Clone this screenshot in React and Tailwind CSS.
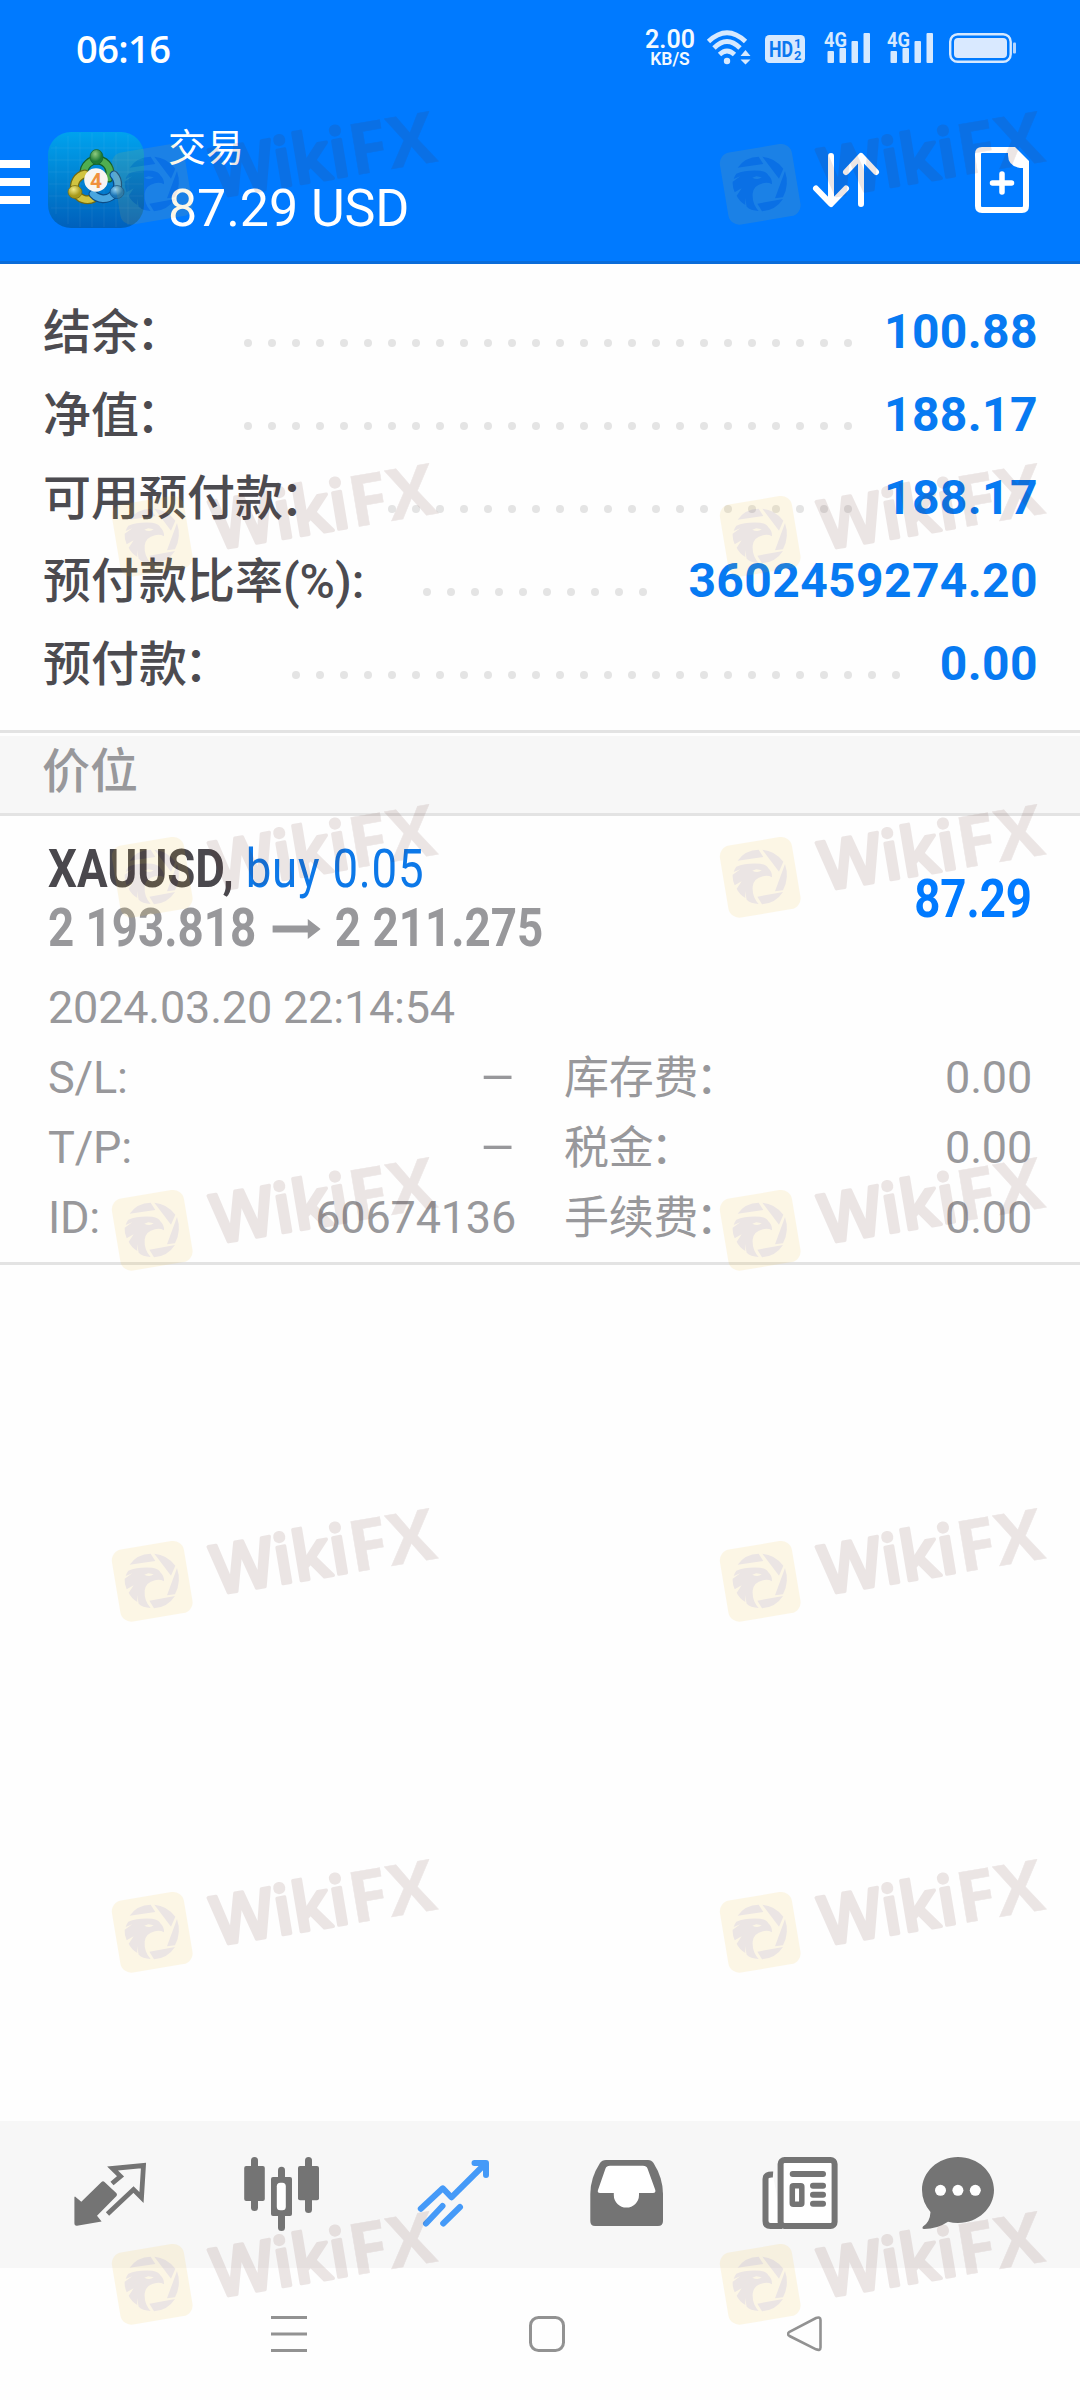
import React from 'react'

const summary = [
  { label: '结余', colon: '：', value: '100.88', start: 244, dots: 26 },
  { label: '净值', colon: '：', value: '188.17', start: 244, dots: 26 },
  { label: '可用预付款', colon: '：', value: '188.17', start: 388, dots: 20 },
  { label: '预付款比率(%):', value: '3602459274.20', start: 423, dots: 10 },
  { label: '预付款', colon: '：', value: '0.00', start: 292, dots: 26 },
]

const details = [
  { left: 'S/L:', right: '库存费', rightValue: '0.00' },
  { left: 'T/P:', right: '税金', rightValue: '0.00' },
  { left: 'ID:', leftValue: '60674136', right: '手续费', rightValue: '0.00' },
]

const Signal = () => (
  <svg className="h-9 w-12" viewBox="0 0 48 36" fill="#d6e9ff">
    <text x="0" y="18.5" fontSize="21" fontWeight="700" fontFamily="Roboto" textLength="23" lengthAdjust="spacingAndGlyphs">4G</text>
    <rect x="3.5" y="23" width="6.5" height="12" rx="1" />
    <rect x="15.5" y="20" width="6.5" height="15" rx="1" />
    <rect x="27.5" y="13" width="6.5" height="22" rx="1" />
    <rect x="39.5" y="5" width="6.5" height="30" rx="1" />
  </svg>
)

const StatusBar = () => (
  <div className="flex h-[98px] items-start pl-[76px] pr-[63px] text-white">
    <div className="mt-[21px] font-['Open_Sans',sans-serif] text-[38px] font-semibold leading-[54px] tracking-[-0.6px]">06:16</div>
    <div className="ml-auto flex pt-7">
      <div className="-mt-px mr-[2px] flex w-[52px] flex-col items-center font-semibold text-[#f2f9ff]">
        <span className="text-[25px] leading-[25px]">2.00</span>
        <span className="text-[17.5px] leading-[14px]">KB/S</span>
      </div>
      <svg className="ml-2 h-10 w-[46px]" viewBox="0 0 46 40" fill="none" stroke="#d6e9ff" strokeWidth="4.8">
        <path d="M2.5 13.5Q21 -4 39.5 13.5M8 20Q21 7 34 20M13.5 26.5Q21 19.5 28.5 26.5" />
        <circle cx="21" cy="33" r="3.2" fill="#d6e9ff" stroke="none" />
        <path d="M34.5 28l5-6 5 6zM34.5 31.5l5 5 5-5z" fill="#d6e9ff" stroke="none" />
      </svg>
      <svg className="ml-[13px] h-10 w-10" viewBox="0 0 40 40">
        <rect y="7" width="40" height="28" rx="4.5" fill="#d6e9ff" />
        <text x="4" y="29" fontSize="22" fontWeight="700" fontFamily="Roboto" fill="#0b78f0" textLength="24" lengthAdjust="spacingAndGlyphs">HD</text>
        <text x="29" y="20" fontSize="13" fontWeight="700" fontFamily="Roboto" fill="#0b78f0">1</text>
        <text x="29" y="31.5" fontSize="13" fontWeight="700" fontFamily="Roboto" fill="#0b78f0">2</text>
      </svg>
      <div className="ml-[19px] flex gap-[15px]">
        <Signal />
        <Signal />
      </div>
      <svg className="ml-[13px] h-10 w-[69px]" viewBox="0 0 69 40">
        <rect x="2.2" y="6.2" width="60.5" height="27.6" rx="7.5" fill="none" stroke="#d6e9ff" strokeWidth="2.4" />
        <rect x="6" y="10" width="53" height="20" rx="4" fill="#d9e9ff" />
        <rect x="65" y="14.5" width="3" height="11" rx="1" fill="#b5d6ff" />
      </svg>
    </div>
  </div>
)

const AppLogo = () => (
  <svg className="ml-[18px] h-24 w-24" viewBox="0 0 96 96">
    <defs>
      <linearGradient id="tile" x1="0" y1="0" x2="0" y2="1">
        <stop offset="0" stopColor="#00a2ee" />
        <stop offset=".5" stopColor="#0082d2" />
        <stop offset="1" stopColor="#0060bc" />
      </linearGradient>
      <radialGradient id="green" cx=".4" cy=".3"><stop offset="0" stopColor="#8fcb80" /><stop offset="1" stopColor="#1d7a35" /></radialGradient>
      <radialGradient id="yellow" cx=".4" cy=".3"><stop offset="0" stopColor="#f3eb86" /><stop offset="1" stopColor="#a89a1a" /></radialGradient>
      <radialGradient id="sky" cx=".4" cy=".3"><stop offset="0" stopColor="#93d2f5" /><stop offset="1" stopColor="#1873b5" /></radialGradient>
    </defs>
    <rect width="96" height="96" rx="23" fill="url(#tile)" />
    <path d="M8 14V82M20 4V92M32 1V95M44 1V95M56 1V95M68 1V95M80 3V93M3 16H93M1 28H95M1 40H95M1 52H95M1 64H95M3 76H93" stroke="#fff" strokeOpacity=".06" />
    <g fill="none" strokeLinecap="round">
      <path d="M36 42a13 13 0 1 1 25 4" stroke="#14602a" strokeWidth="9" />
      <path d="M36 42a13 13 0 1 1 25 4" stroke="#4fae50" strokeWidth="6.5" />
      <path d="M46 66a13 13 0 1 1-9-24" stroke="#716a12" strokeWidth="9" />
      <path d="M46 66a13 13 0 1 1-9-24" stroke="#d1c440" strokeWidth="6.5" />
      <path d="M66 43a13 13 0 1 1-21 19" stroke="#0c4c86" strokeWidth="9" />
      <path d="M66 43a13 13 0 1 1-21 19" stroke="#4aa6df" strokeWidth="6.5" />
    </g>
    <ellipse cx="48.5" cy="25" rx="6.5" ry="7.5" fill="url(#green)" stroke="#14602a" strokeWidth=".7" />
    <ellipse cx="27" cy="60" rx="7" ry="6.5" fill="url(#yellow)" stroke="#716a12" strokeWidth=".7" />
    <ellipse cx="69" cy="60" rx="7" ry="6.5" fill="url(#sky)" stroke="#0c4c86" strokeWidth=".7" />
    <circle cx="48" cy="48" r="11.8" fill="#f7f5f2" />
    <text x="48" y="55.5" textAnchor="middle" fontSize="21" fontWeight="700" fontFamily="Roboto" fill="#f0913c">4</text>
  </svg>
)

const Header = () => (
  <header className="h-[264px] border-b-[3px] border-[#0a6cd9] bg-[#007aff] text-white">
    <StatusBar />
    <div className="flex items-start">
      <div className="mt-[62px] flex w-[30px] flex-col gap-[10px]">
        <span className="h-2 bg-white" />
        <span className="h-2 bg-white" />
        <span className="h-2 bg-white" />
      </div>
      <div className="mt-[34px]">
        <AppLogo />
      </div>
      <div className="ml-6 mt-[26px] whitespace-nowrap">
        <div className="text-[38px] leading-[48px]">交易</div>
        <div className="mt-[7px] text-[52px] leading-[60px] tracking-[-0.1px]">87.29 USD</div>
      </div>
      <svg className="ml-auto mt-[50px] h-[64px] w-[70px]" viewBox="0 0 70 64" fill="none" stroke="#fff" strokeWidth="6" strokeLinecap="round" strokeLinejoin="round">
        <path d="M20 8V55M5 40.5L20 56L35 40.5M50 56V9M35 24L50 8L65 24" />
      </svg>
      <svg className="ml-[93px] mr-[50px] mt-[48px] h-[68px] w-[56px]" viewBox="0 0 56 68" fill="none" stroke="#fff" strokeWidth="6">
        <path d="M40 4H8Q4 4 4 8V60Q4 64 8 64H48Q52 64 52 60V16" />
        <path d="M34 1H41L55 15V22H46Q34 20 34 9Z" fill="#fff" stroke="none" />
        <path d="M28 28V46M18.5 37H37.5" strokeWidth="5.5" strokeLinecap="round" />
      </svg>
    </div>
  </header>
)

const Summary = () => (
  <section className="border-b-[3px] border-[#e3e3e3] pb-[25px] pl-[43px] pr-[42px] pt-[26px]">
    {summary.map((row) => (
      <div key={row.label} className="flex h-[83px] items-center whitespace-nowrap text-[48px] leading-[83px]">
        <div className="shrink-0 pt-[2px] font-medium text-[#4c4b50]" style={{ width: row.start - 43 }}>
          {row.label}
          {row.colon && <span className="-ml-[3px]">{row.colon}</span>}
        </div>
        <div className="mt-[23px] flex shrink-0 gap-4">
          {Array.from({ length: row.dots }, (_, i) => (
            <span key={i} className="size-2 rounded-full bg-[#e4e4e4]" />
          ))}
        </div>
        <div className="ml-auto font-bold tracking-[0.4px] text-[#077af2]">{row.value}</div>
      </div>
    ))}
  </section>
)

const Position = () => (
  <section className="border-b-[3px] border-[#e3e3e3] pb-[9px] pl-12 pr-12 pt-6 text-[#98989b]">
    <div className="flex items-center justify-between whitespace-nowrap text-[53px] leading-[59px]">
      <div>
        <div className="origin-left scale-x-[0.86]">
          <span className="font-bold text-[#4a484d]">XAUUSD,</span>
          <span className="tracking-[0.9px] text-[#0c78e8]"> buy 0.05</span>
        </div>
        <div className="flex origin-left scale-x-[0.863] items-center font-bold">
          2 193.818
          <svg className="ml-[19px] mr-[16px] h-5 w-[56px]" viewBox="0 0 56 20" fill="#98989b">
            <path d="M0 6.5H41V0L56 10L41 20V13.5H0Z" />
          </svg>
          2 211.275
        </div>
      </div>
      <div className="origin-right scale-x-[0.86] font-bold text-[#007aff]">87.29</div>
    </div>
    <div className="mt-[15px] text-[45px] leading-[70px] tracking-[-0.2px]">
      <div>2024.03.20 22:14:54</div>
      {details.map((row) => (
        <div key={row.left} className="flex h-[70px] whitespace-nowrap">
          <div className="flex w-[468px] justify-between">
            <span>{row.left}</span>
            {row.leftValue ? <span>{row.leftValue}</span> : <span className="origin-right scale-x-[1.26]">–</span>}
          </div>
          <div className="ml-12 flex flex-1 justify-between">
            <span className="pt-px">
              {row.right}
              <span className="-ml-[3px]">：</span>
            </span>
            <span>{row.rightValue}</span>
          </div>
        </div>
      ))}
    </div>
  </section>
)

const TabBar = () => (
  <nav className="flex h-[147px] gap-[92px] bg-[#f7f7f7] pl-[70px] pt-[33px]">
    <svg className="size-20 shrink-0" viewBox="0 0 80 80" fill="#747474">
      <path d="M5 42.5L11.3 47.7L31.5 28Q33 26.5 34.5 28L46.5 39.2Q47.5 40.7 46.5 42L27 61.7L31.6 67.5L7 71.7Q4.4 72 4.4 69V43Z" />
      <path d="M42 29.5L50.5 22.3L42.5 14.5L73.5 11.5L71.5 43.5L63.5 35.5L37.5 60" fill="none" stroke="#747474" strokeWidth="4.8" />
    </svg>
    <svg className="size-20 shrink-0" viewBox="0 0 80 80" fill="#747474">
      <rect x="2.2" y="12" width="20.6" height="35" rx="2" />
      <rect x="9" y="3" width="7" height="54" rx="3.5" />
      <rect x="36" y="12.7" width="7" height="64.3" rx="3.5" />
      <rect x="29" y="23" width="21" height="39" rx="2" />
      <rect x="34.8" y="28.7" width="9" height="27.5" rx="3.5" fill="#fff" />
      <rect x="56" y="12" width="21" height="34.3" rx="2" />
      <rect x="63" y="3" width="7" height="56" rx="3.5" />
    </svg>
    <svg className="size-20 shrink-0" viewBox="0 0 80 80" fill="none" stroke="#459af8" strokeWidth="6" strokeLinecap="round" strokeLinejoin="round">
      <path d="M6.8 54.7L28.8 34.3L37.4 43.3L71.5 9.5M60.5 9H72V21M12 69.5L28.5 52M29.2 69.5L46 53" />
    </svg>
    <svg className="size-20 shrink-0" viewBox="0 0 80 80" fill="#747474">
      <path d="M20 6H62Q65.5 6 67.5 9Q77 24 77 40V67Q77 72 72 72H9Q4.3 72 4.3 67V40Q4.3 24 14 9Q16 6 20 6Z" />
      <path d="M24 11.7H57Q60.5 11.7 61.5 14.5L69.3 36Q70 39 67 39H53V41A12.6 12.6 0 0 1 27.8 41V39H14Q11 39 12 36L19.5 14.5Q20.5 11.7 24 11.7Z" fill="#fff" />
    </svg>
    <svg className="size-20 shrink-0" viewBox="0 0 80 80" fill="none" stroke="#747474" strokeWidth="6">
      <path d="M15 20.5Q7.5 20 7.5 25V67Q7.5 72 12.5 72H24" fill="#fff" />
      <rect x="22.6" y="6" width="54" height="66" rx="4" fill="#fff" />
      <path d="M34.7 20H65M55 31.8H65M55 40.8H65M55 49.8H65" strokeLinecap="round" />
      <rect x="34.3" y="31.8" width="9.5" height="18.5" rx="1" strokeWidth="5.5" />
    </svg>
    <svg className="-ml-3 size-20 shrink-0" viewBox="0 0 80 80" fill="#747474">
      <path d="M40 3C60 3 76 18 76 36S60 69 40 69Q35 69 30 67.7Q19 75 6 75Q3.5 74.5 5 72.5Q12 68 12.5 58Q4 48 4 36C4 18 20 3 40 3Z" />
      <g fill="#fff">
        <circle cx="22.5" cy="36.3" r="5.5" />
        <circle cx="39.9" cy="36.3" r="5.5" />
        <circle cx="57.3" cy="36.3" r="5.5" />
      </g>
    </svg>
  </nav>
)

const SystemNav = () => (
  <div className="flex h-[132px] items-start pl-[271px] pt-12">
    <svg className="size-9" viewBox="0 0 36 36" stroke="#929292" strokeWidth="3">
      <path d="M0 1.5H36M0 18H36M0 34.5H36" />
    </svg>
    <svg className="ml-[222px] size-9" viewBox="0 0 36 36" fill="none" stroke="#929292" strokeWidth="3">
      <rect x="1.5" y="1.5" width="33" height="33" rx="8" />
    </svg>
    <svg className="ml-[222px] size-9" viewBox="0 0 36 36" fill="none" stroke="#929292" strokeWidth="2.6">
      <path d="M2.5 15.8L29 2Q33.5 0.5 33.5 4V31.5Q33.5 35 29 33.3L2.5 20Q-0.5 18 2.5 15.8Z" />
    </svg>
  </div>
)

const Watermark = ({ x, y }) => (
  <svg className="absolute h-40 w-90" style={{ left: x, top: y }} viewBox="0 0 360 160">
    <g opacity=".11">
      <rect x="25.7" y="64.8" width="73" height="73" rx="11" transform="rotate(-9.5 62.2 101.3)" fill="#f2bc28" />
      <g transform="translate(15 50) scale(.33333)" fill="#5c2620">
        <path d="M74 104Q96 72 137 71L151 93Z" />
        <path d="M148 71Q186 74 211 107L198 137Z" />
        <path d="M216 114Q230 155 210 193L186 196Z" />
        <path d="M133 212L210 198Q188 232 147 235Z" />
        <path d="M70 122Q98 110 142 113Q162 116 166 127Q178 138 177 154Q164 147 150 151Q122 157 119 182Q117 212 137 234Q112 232 101 221L96 195L97 216Q78 204 71 188L86 166L65 178Q58 162 59 146L82 130L62 138Q65 128 70 122Z" />
        <path d="M118 134Q134 142 146 133L130 130Z" fill="#f2bc28" />
      </g>
      <g transform="rotate(-9.5)" fill="#5c2620" stroke="#5c2620" strokeLinejoin="round" fontFamily="Open Sans">
        <text x="105" y="134" fontSize="68" fontWeight="600" strokeWidth="3.5" textLength="138" lengthAdjust="spacingAndGlyphs">Wiki</text>
        <text x="244" y="134.5" fontSize="71" fontWeight="700" strokeWidth=".5" textLength="87" lengthAdjust="spacingAndGlyphs">FX</text>
      </g>
    </g>
  </svg>
)

const App = () => {
  return (
    <div className="relative flex h-[2400px] w-[1080px] flex-col overflow-hidden bg-[#fefefe] font-['Roboto','Noto_Sans_CJK_SC',sans-serif]">
      <Header />
      <Summary />
      <div className="mt-[3px] h-20 border-b-[3px] border-[#e3e3e3] bg-[#f7f7f7] pl-[42px] text-[48px] font-medium leading-[71px] text-[#98989b]">价位</div>
      <Position />
      <main className="flex-1" />
      <TabBar />
      <SystemNav />
      {[83, 435, 776, 1129, 1480, 1831, 2183].map((y) => (
        <React.Fragment key={y}>
          <Watermark x={90} y={y} />
          <Watermark x={698} y={y} />
        </React.Fragment>
      ))}
    </div>
  )
}

export default App
